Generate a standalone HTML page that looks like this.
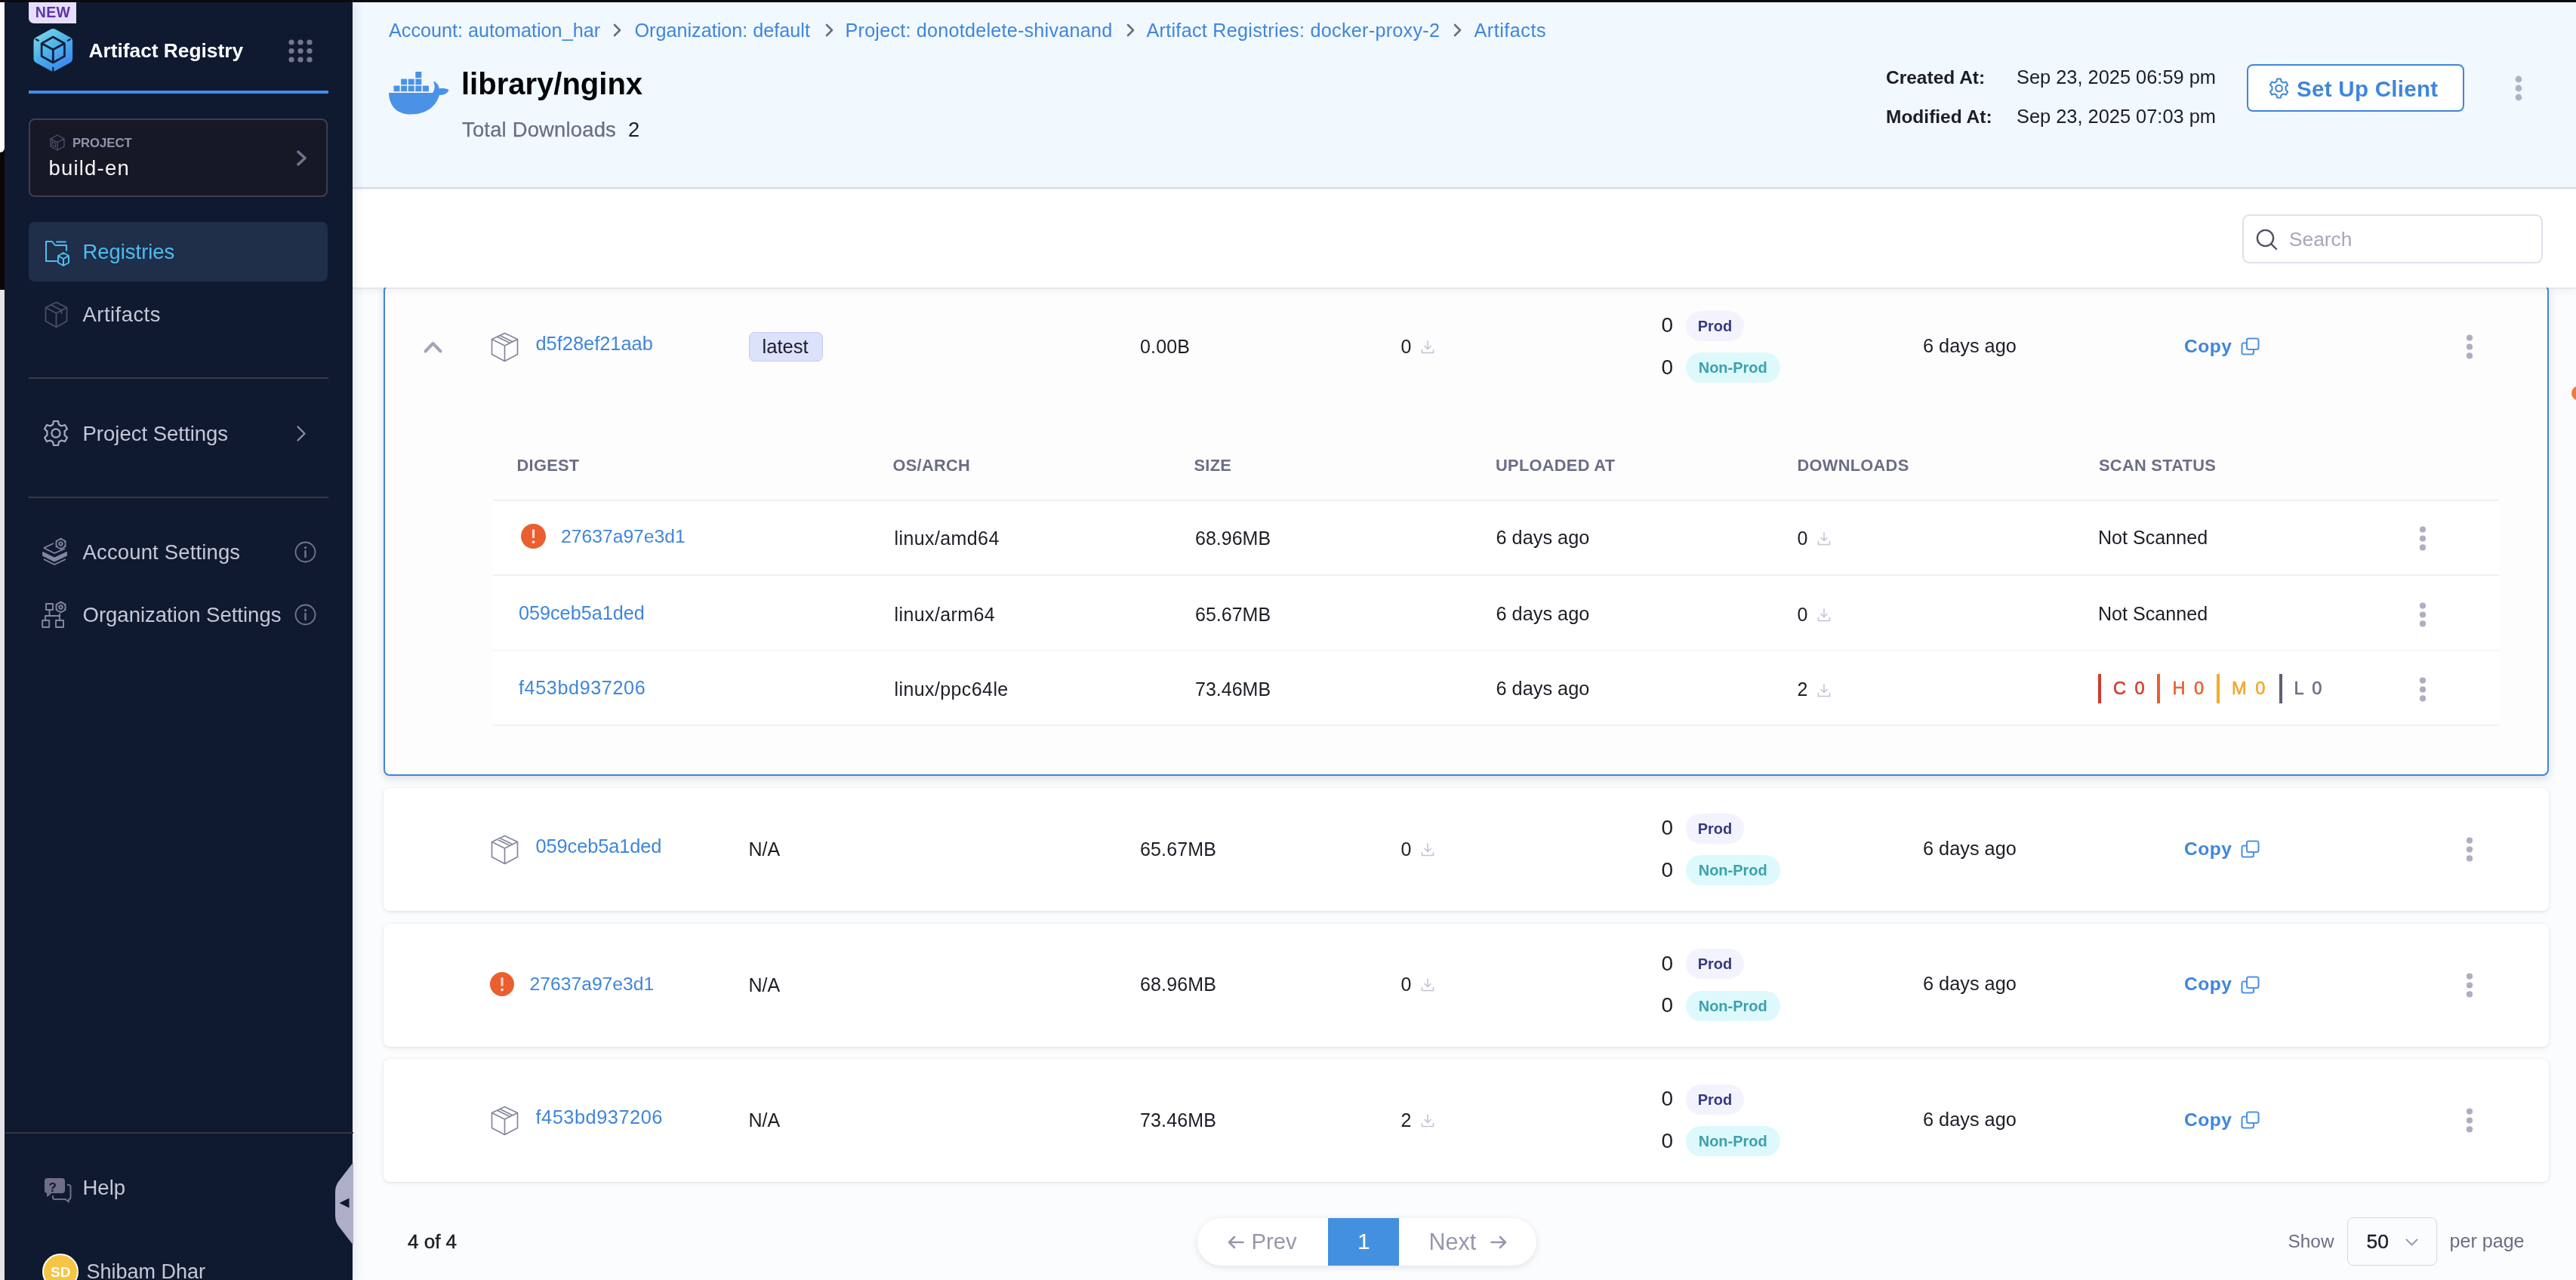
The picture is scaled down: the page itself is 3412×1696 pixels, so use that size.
<!DOCTYPE html>
<html lang="en">
<head>
<meta charset="utf-8">
<title>Artifact Registry - library/nginx</title>
<style>
*{box-sizing:border-box;margin:0;padding:0}
html,body{width:3412px;height:1696px;overflow:hidden;background:#fbfcfe}
body{position:relative;font-family:"Liberation Sans",Arial,sans-serif;color:#1d1d26;-webkit-font-smoothing:antialiased}
.abs{position:absolute}
.g{position:absolute;left:0;top:0;will-change:transform}
.t{position:absolute;white-space:nowrap;line-height:1;transform:translateY(-50%)}
svg{position:absolute;overflow:visible}
a{text-decoration:none;color:inherit}

/* window chrome bits */
#topbar{left:0;top:0;width:3412px;height:2.6px;background:#0b0b0d;z-index:50}
#leftstrip{left:0;top:0;width:6px;height:1696px;background:#e9e9eb}
#leftstrip .w{left:0;top:0;width:6px;height:202px;background:#fff;border-bottom-right-radius:6px}
#leftstrip .k{left:0;top:180px;width:6px;height:204px;background:#0b0707}

/* sidebar */
#side{left:6px;top:0;width:461px;height:1696px;background:#0f1a31;box-shadow:3px 0 14px rgba(30,40,70,.10);z-index:8}
#sidein{position:absolute;left:1.5px;top:0;width:459.5px;height:1696px;will-change:transform}
#side .lbl{color:#c6c7d6;font-size:27px}
#side .div{position:absolute;left:30px;width:396.5px;height:2px;background:#3a3a40}

/* header */
#head{left:467px;top:0;width:2945px;height:250px;background:#f1f8fe;border-bottom:2px solid #d4dcea}
.bc{font-size:24px;color:#3f86db}
.bcsep{color:#6a6d80}
#tool{left:467px;top:252px;width:2945px;height:129px;background:#fff;box-shadow:0 3px 10px rgba(40,41,61,.08),0 1px 2px rgba(96,97,112,.12);z-index:5}

/* cards */
.card{position:absolute;left:508px;width:2868px;background:#fff;border-radius:8px;box-shadow:0 0 2px rgba(40,41,61,.05),0 1px 4px rgba(96,97,112,.13),0 2px 8px rgba(40,41,61,.04)}
.link{color:#3f86db}
.cell{font-size:26px;color:#1d1d26}
.pill{position:absolute;height:40px;border-radius:20px;font-weight:700;font-size:20px;line-height:40px;text-align:center}
.prod{background:#f3f3fd;color:#343b80}
.nprod{background:#ddf9fb;color:#3ca1ab}
.th{font-size:21.8px;font-weight:700;color:#6b6d85;letter-spacing:.3px}
.hr{position:absolute;height:1.6px;background:#eff0f7}
</style>
</head>
<body>

<div id="leftstrip" class="abs"><div class="abs k"></div><div class="abs w"></div></div>

<!-- ============ SIDEBAR ============ -->
<nav id="side" class="abs"><div id="sidein">
  <!-- NEW badge -->
  <div class="abs" style="left:29.7px;top:0;width:63.3px;height:30.7px;background:#e6defc;border-radius:0 0 0 7px"></div>
  <span class="t" style="left:38.8px;top:16.5px;font-size:19.5px;font-weight:700;color:#5b35a3;letter-spacing:.3px">NEW</span>

  <!-- product logo -->
  <svg style="left:34.5px;top:35.6px" width="54.6" height="60.5" viewBox="0 0 54 58" preserveAspectRatio="none">
    <defs><linearGradient id="lg" x1="0.15" y1="0" x2="0.8" y2="1"><stop offset="0" stop-color="#7adbe6"/><stop offset=".5" stop-color="#49aeea"/><stop offset="1" stop-color="#3b84f0"/></linearGradient></defs>
    <path d="M24 2.6 Q27 1 30 2.6 L49.5 13 Q52.5 14.6 52.5 18 L52.5 40 Q52.5 43.4 49.5 45 L30 55.4 Q27 57 24 55.4 L4.5 45 Q1.5 43.4 1.5 40 L1.5 18 Q1.5 14.6 4.5 13 Z" fill="url(#lg)"/>
    <path d="M27 12.5 L42 20.5 L42 37 L27 45 L12 37 L12 20.5 Z M12 20.5 L27 28.5 L42 20.5 M27 28.5 L27 45" fill="none" stroke="#10203c" stroke-width="2.7" stroke-linejoin="round"/>
    <path d="M27 50.5 L27 56.5 M4 15 L8.5 17.5 M50 15 L45.5 17.5" stroke="#10203c" stroke-width="2.2" fill="none"/>
  </svg>
  <span class="t" style="left:109.5px;top:67px;font-size:26.3px;font-weight:700;color:#fff">Artifact Registry</span>

  <!-- module grid -->
  <svg style="left:373.5px;top:52px" width="32" height="31" viewBox="0 0 32 31" fill="#76778e">
    <circle cx="4" cy="4" r="3.6"/><circle cx="16" cy="4" r="3.6"/><circle cx="28" cy="4" r="3.6"/>
    <circle cx="4" cy="15.5" r="3.6"/><circle cx="16" cy="15.5" r="3.6"/><circle cx="28" cy="15.5" r="3.6"/>
    <circle cx="4" cy="27" r="3.6"/><circle cx="16" cy="27" r="3.6"/><circle cx="28" cy="27" r="3.6"/>
  </svg>
  <div class="abs" style="left:30px;top:120.2px;width:396.5px;height:4.3px;background:#3f8fe6"></div>

  <!-- project selector -->
  <div class="abs" style="left:30px;top:157px;width:396px;height:104px;background:#161826;border:2px solid #3d3f50;border-radius:8px"></div>
  <svg style="left:58.2px;top:178px" width="20" height="22" viewBox="0 0 20 22" fill="none" stroke="#4b4d64" stroke-width="1.4" stroke-linejoin="round">
    <path d="M10 1 L19 5.8 L19 16.2 L10 21 L1 16.2 L1 5.8 Z M1 5.8 L10 10.6 L19 5.8 M10 10.6 L10 21"/><path d="M3.2 9.6 L7.6 12 L7.6 16.8 L3.2 14.4 Z" stroke-width="1.2"/>
  </svg>
  <span class="t" style="left:88px;top:189.8px;font-size:16.8px;font-weight:700;color:#9495ab;letter-spacing:-.1px">PROJECT</span>
  <span class="t" style="left:56.5px;top:222.6px;font-size:27.5px;color:#f4f4f8;letter-spacing:1.2px">build-en</span>
  <svg style="left:384.5px;top:199px" width="13" height="21" viewBox="0 0 14 22" fill="none" stroke="#70718a" stroke-width="3.8" stroke-linecap="round" stroke-linejoin="round"><path d="M2 2 L12 11 L2 20"/></svg>

  <!-- Registries (active) -->
  <div class="abs" style="left:30px;top:294px;width:396px;height:79px;background:#1f2e49;border-radius:8px"></div>
  <svg style="left:50.5px;top:318px" width="34" height="36" viewBox="0 0 34 36" fill="none" stroke="#52bef0" stroke-width="2" stroke-linejoin="round" stroke-linecap="round">
    <path d="M16 28 L2 28 L2 2 L10 2 L14 7 L29 7 L29 14"/><path d="M16 2.5 L28 2.5" stroke-width="1.8"/>
    <path d="M25 17 L32 21 L32 30 L25 34 L18 30 L18 21 Z M18 21 L25 25 L32 21 M25 25 L25 34"/>
  </svg>
  <span class="t lbl" style="left:101.5px;top:334px;font-size:27.4px;color:#4dbdf0">Registries</span>

  <!-- Artifacts -->
  <svg style="left:50.5px;top:399px" width="31" height="36" viewBox="0 0 31 36" fill="none" stroke="#4b4f63" stroke-width="1.8" stroke-linejoin="round">
    <path d="M15.5 1.5 L29.5 8.5 L29.5 26.5 L15.5 34.5 L1.5 26.5 L1.5 8.5 Z M1.5 8.5 L15.5 16 L29.5 8.5 M15.5 16 L15.5 34.5 M8.5 5 L22.5 12.2 L22.5 17"/>
  </svg>
  <span class="t lbl" style="left:101.5px;top:417px;font-size:27.4px;letter-spacing:.5px">Artifacts</span>

  <div class="div" style="top:500px"></div>

  <!-- Project Settings -->
  <svg style="left:48.5px;top:556px" width="34" height="36" viewBox="0 0 34 36" fill="none" stroke="#a9aabc" stroke-width="2.2" stroke-linejoin="round">
    <path d="M14 2 L20 2 L21 6.5 L24.5 8.5 L29 7 L32 12.2 L28.6 15.4 L28.6 20.6 L32 23.8 L29 29 L24.5 27.5 L21 29.5 L20 34 L14 34 L13 29.5 L9.5 27.5 L5 29 L2 23.8 L5.4 20.6 L5.4 15.4 L2 12.2 L5 7 L9.5 8.5 L13 6.5 Z"/>
    <circle cx="17" cy="18" r="5.6"/>
  </svg>
  <span class="t lbl" style="left:101.5px;top:575px;font-size:27.5px">Project Settings</span>
  <svg style="left:384.5px;top:564px" width="12" height="21" viewBox="0 0 12 21" fill="none" stroke="#8e8fa6" stroke-width="2.2" stroke-linecap="round" stroke-linejoin="round"><path d="M1.5 1.5 L10.5 10.5 L1.5 19.5"/></svg>

  <div class="div" style="top:658px"></div>

  <!-- Account Settings -->
  <svg style="left:46.5px;top:712px" width="36" height="38" viewBox="0 0 36 38" fill="none" stroke="#8586a0" stroke-width="1.8" stroke-linejoin="round">
    <path d="M3 14 L16 8 M3 14 L17 21 L31 15" /><path d="M2 20 L17 27.5 L33 20 L33 24 L17 31.5 L2 24 Z" fill="#8586a0"/><path d="M3 29 L17 36 L32 29"/>
    <circle cx="25.5" cy="8.5" r="6.2"/><circle cx="25.5" cy="8.5" r="2.2"/>
    <path d="M25.5 0.8 L25.5 2.6 M25.5 14.4 L25.5 16.2 M18.8 4.6 L20.4 5.5 M30.6 11.5 L32.2 12.4 M18.8 12.4 L20.4 11.5 M30.6 5.5 L32.2 4.6" stroke-width="2.4"/>
  </svg>
  <span class="t lbl" style="left:101.5px;top:732px;font-size:27.5px;letter-spacing:.15px">Account Settings</span>
  <svg style="left:381.5px;top:717px" width="29" height="29" viewBox="0 0 29 29" fill="none" stroke="#74768d" stroke-width="1.8"><circle cx="14.5" cy="14.5" r="13"/><path d="M14.5 13 L14.5 21" stroke-width="2.4" stroke-linecap="round"/><circle cx="14.5" cy="8.6" r="1.6" fill="#74768d" stroke="none"/></svg>

  <!-- Organization Settings -->
  <svg style="left:46.5px;top:796px" width="36" height="38" viewBox="0 0 36 38" fill="none" stroke="#8586a0" stroke-width="1.9" stroke-linejoin="round">
    <rect x="6" y="4" width="9" height="8"/><path d="M10.5 12 L10.5 20 M5 26 L5 20 L24 20 L24 26 M24 20 L24 17"/>
    <rect x="1.2" y="26" width="9" height="9"/><rect x="19" y="26" width="10" height="9"/>
    <circle cx="25.5" cy="8.5" r="6.2"/><circle cx="25.5" cy="8.5" r="2.2"/>
    <path d="M25.5 0.8 L25.5 2.6 M25.5 14.4 L25.5 16.2 M18.8 4.6 L20.4 5.5 M30.6 11.5 L32.2 12.4 M18.8 12.4 L20.4 11.5 M30.6 5.5 L32.2 4.6" stroke-width="2.4"/>
  </svg>
  <span class="t lbl" style="left:101.5px;top:815px;font-size:27.5px">Organization Settings</span>
  <svg style="left:381.5px;top:800px" width="29" height="29" viewBox="0 0 29 29" fill="none" stroke="#74768d" stroke-width="1.8"><circle cx="14.5" cy="14.5" r="13"/><path d="M14.5 13 L14.5 21" stroke-width="2.4" stroke-linecap="round"/><circle cx="14.5" cy="8.6" r="1.6" fill="#74768d" stroke="none"/></svg>

  <div class="abs" style="left:-1.5px;top:1500px;width:461px;height:2px;background:#33343d"></div>

  <!-- Help -->
  <svg style="left:49.5px;top:1560px" width="38" height="34" viewBox="0 0 38 34" fill="none" stroke="#6e6f87" stroke-width="2" stroke-linejoin="round">
    <path d="M5 2 L24 2 Q27 2 27 5 L27 17 Q27 20 24 20 L10 20 L5 24.5 L5 20 Q2 20 2 17 L2 5 Q2 2 5 2 Z" fill="#6e6f87"/>
    <path d="M31 10 L33 10 Q35.5 10 35.5 12.5 L35.5 26.5 Q35.5 29 33 29 L33 32.5 L28.5 29 L14.5 29 Q12 29 12 26.5 L12 24"/>
  </svg>
  <span class="t" style="left:56.5px;top:1573px;font-size:17px;font-weight:700;color:#0f1a31">?</span>
  <span class="t lbl" style="left:101.5px;top:1574px;font-size:27.5px">Help</span>

  <!-- collapse handle -->
  <svg style="left:435.5px;top:1540px" width="24" height="110" viewBox="0 0 24 110"><path d="M24 0 L4 26 Q0 32 0 40 L0 70 Q0 78 4 84 L24 110 Z" fill="#aeafc6"/><path d="M18.5 47.5 L18.5 60.5 L5.5 54 Z" fill="#0f1a31"/></svg>

  <!-- user -->
  <div class="abs" style="left:48px;top:1661px;width:48px;height:48px;border-radius:50%;background:#f6c544;border:2px solid #fff"></div>
  <span class="t" style="left:59px;top:1685px;font-size:19px;font-weight:700;color:#fff">SD</span>
  <span class="t lbl" style="left:106.5px;top:1685px;font-size:27px">Shibam Dhar</span>
</div></nav>

<!-- ============ HEADER ============ -->
<header id="head" class="abs"><div class="g">
  <a class="t bc" style="left:48px;top:41px;font-size:25.2px">Account: automation_har</a><svg style="left:345px;top:31px" width="11" height="18" viewBox="0 0 11 18" fill="none" stroke="#6a6d80" stroke-width="2.6" stroke-linecap="round" stroke-linejoin="round"><path d="M2 2 L9 9 L2 16"/></svg>
  <a class="t bc" style="left:373.5px;top:41px;font-size:25.2px">Organization: default</a><svg style="left:625.5px;top:31px" width="11" height="18" viewBox="0 0 11 18" fill="none" stroke="#6a6d80" stroke-width="2.6" stroke-linecap="round" stroke-linejoin="round"><path d="M2 2 L9 9 L2 16"/></svg>
  <a class="t bc" style="left:652.5px;top:41px;font-size:25.2px;letter-spacing:.22px">Project: donotdelete-shivanand</a><svg style="left:1024.5px;top:31px" width="11" height="18" viewBox="0 0 11 18" fill="none" stroke="#6a6d80" stroke-width="2.6" stroke-linecap="round" stroke-linejoin="round"><path d="M2 2 L9 9 L2 16"/></svg>
  <a class="t bc" style="left:1051.5px;top:41px;font-size:25.2px;letter-spacing:.27px">Artifact Registries: docker-proxy-2</a><svg style="left:1458px;top:31px" width="11" height="18" viewBox="0 0 11 18" fill="none" stroke="#6a6d80" stroke-width="2.6" stroke-linecap="round" stroke-linejoin="round"><path d="M2 2 L9 9 L2 16"/></svg>
  <a class="t bc" style="left:1485.5px;top:41px;font-size:25.2px;letter-spacing:.5px">Artifacts</a>

  <!-- docker whale -->
  <svg style="left:48px;top:94px" width="80" height="58" viewBox="0 0 80 58" fill="#4a92e6">
    <path d="M0 29 L58 29 C61 25 61.5 20 59.5 15.5 C59 14 60.5 13.5 61.5 14.5 C65 17.5 66.5 20.5 66.8 23.5 C70.5 22.5 75 23 79.5 25 C78 29.5 73.5 32 67 32 C63 45 52 57.5 29 57.5 C11 57.5 0.5 47 0 29 Z"/>
    <rect x="6.5" y="19.6" width="8" height="7.6"/><rect x="16.1" y="19.6" width="8" height="7.6"/><rect x="25.7" y="19.6" width="8" height="7.6"/><rect x="35.3" y="19.6" width="8" height="7.6"/><rect x="44.9" y="19.6" width="8" height="7.6"/>
    <rect x="16.1" y="10.6" width="8" height="7.6"/><rect x="25.7" y="10.6" width="8" height="7.6"/><rect x="35.3" y="10.6" width="8" height="7.6"/>
    <rect x="35.3" y="1" width="8" height="8.2"/>
  </svg>
  <h1 class="t" style="left:144px;top:111px;font-size:40px;font-weight:700;color:#050507">library/nginx</h1>
  <span class="t" style="left:145px;top:172px;font-size:27.4px;color:#6b6d85;letter-spacing:.2px;-webkit-text-stroke:.25px #6b6d85">Total Downloads</span>
  <span class="t" style="left:365px;top:172px;font-size:27.4px;color:#1d1d26">2</span>

  <span class="t" style="left:2031px;top:103px;font-size:24.5px;font-weight:700;color:#1d1d26">Created At:</span>
  <span class="t" style="left:2204px;top:103px;font-size:25.4px;color:#1d1d26">Sep 23, 2025 06:59 pm</span>
  <span class="t" style="left:2031px;top:155px;font-size:24.5px;font-weight:700;color:#1d1d26">Modified At:</span>
  <span class="t" style="left:2204px;top:155px;font-size:25.4px;color:#1d1d26">Sep 23, 2025 07:03 pm</span>

  <div class="abs" style="left:2509px;top:85px;width:288px;height:63px;border:2px solid #3f86db;border-radius:8px;background:#fff"></div>
  <svg style="left:2538px;top:103px" width="27" height="28" viewBox="0 0 34 36" fill="none" stroke="#3f86db" stroke-width="2.6" stroke-linejoin="round">
    <path d="M14 2 L20 2 L21 6.5 L24.5 8.5 L29 7 L32 12.2 L28.6 15.4 L28.6 20.6 L32 23.8 L29 29 L24.5 27.5 L21 29.5 L20 34 L14 34 L13 29.5 L9.5 27.5 L5 29 L2 23.8 L5.4 20.6 L5.4 15.4 L2 12.2 L5 7 L9.5 8.5 L13 6.5 Z"/><circle cx="17" cy="18" r="5.6"/>
  </svg>
  <span class="t" style="left:2575px;top:118px;font-size:29.5px;font-weight:700;color:#3f86db;letter-spacing:.3px">Set Up Client</span>
  <svg style="left:2864px;top:100px" width="10" height="34" viewBox="0 0 10 34" fill="#b0b1c4"><circle cx="5" cy="5" r="4.4"/><circle cx="5" cy="17" r="4.4"/><circle cx="5" cy="29" r="4.4"/></svg>
</div></header>

<!-- ============ TOOLBAR ============ -->
<div id="tool" class="abs"><div class="g">
  <div class="abs" style="left:2503px;top:32.3px;width:398px;height:65px;border:2px solid #dfe0eb;border-radius:9px;background:#fff"></div>
  <svg style="left:2521px;top:51px" width="29" height="29" viewBox="0 0 29 29" fill="none" stroke="#4f5162" stroke-width="2.4" stroke-linecap="round"><circle cx="12.5" cy="12.5" r="10.6"/><path d="M20.5 20.5 L27 27"/></svg>
  <span class="t" style="left:2565px;top:65px;font-size:26.3px;color:#a6a7ba">Search</span>
</div></div>

<!-- ============ CONTENT ============ -->
<main id="main" class="g">
    <!-- expanded version card -->
    <section class="card" style="top:377px;height:651px;background:#fdfdfe;border:2px solid #3f86db;box-shadow:0 4px 12px rgba(40,41,61,.14)"></section>
    <div class="abs" style="left:653px;top:664px;width:2657px;height:298px;background:#fff"></div>
    <svg style="left:561px;top:451.5px" width="25" height="16" viewBox="0 0 25 16" fill="none" stroke="#a3a4ba" stroke-width="4" stroke-linecap="round" stroke-linejoin="round"><path d="M2.5 13.5 L12.5 3 L22.5 13.5"/></svg>
    <svg style="left:650px;top:439.5px" width="37" height="40" viewBox="0 0 37 40" fill="none" stroke="#85869e" stroke-width="1.7" stroke-linejoin="round"><path d="M18.5 1.5 L35.5 9.5 L35.5 29.5 L18.5 38.5 L1.5 29.5 L1.5 9.5 Z M1.5 9.5 L18.5 18 L35.5 9.5 M18.5 18 L18.5 38.5 M8.5 6.2 L25.5 14.5 M12 4.6 L29 12.8"/></svg>
    <a class="t" style="left:709.5px;top:456.0px;font-size:25.4px;color:#3f86db;">d5f28ef21aab</a>
    <span class="abs" style="left:991.5px;top:440.0px;width:98px;height:39px;background:#dce1fc;border:1.5px solid #c3caf8;border-radius:7px"></span>
    <span class="t" style="left:1009.5px;top:460.1px;font-size:25.6px;color:#1d1d26;">latest</span>
    <span class="t" style="left:1510px;top:458.5px;font-size:25px;color:#1d1d26;letter-spacing:.15px">0.00B</span>
    <span class="t" style="left:1855.5px;top:458.5px;font-size:25px;color:#1d1d26;">0</span>
    <svg style="left:1881.5px;top:450.8px" width="18" height="18" viewBox="0 0 18 18" fill="none" stroke="#c3c4d6" stroke-width="1.6" stroke-linecap="round" stroke-linejoin="round"><path d="M9 1 L9 11 M5 7.5 L9 11.5 L13 7.5 M1.5 12.5 L1.5 16.5 L16.5 16.5 L16.5 12.5"/></svg>
    <span class="t" style="left:2200.5px;top:431.3px;font-size:28px;color:#1d1d26;">0</span>
    <span class="pill prod" style="left:2233px;top:411.7px;width:77px">Prod</span>
    <span class="t" style="left:2200.5px;top:486.8px;font-size:28px;color:#1d1d26;">0</span>
    <span class="pill nprod" style="left:2233px;top:467.2px;width:124.5px">Non-Prod</span>
    <span class="t" style="left:2547px;top:458.5px;font-size:25.3px;color:#1d1d26;">6 days ago</span>
    <span class="t" style="left:2893px;top:458.7px;font-size:24.6px;color:#3f86db;font-weight:700;letter-spacing:.5px">Copy</span>
    <svg style="left:2968px;top:447.0px" width="25" height="24" viewBox="0 0 25 24" fill="none" stroke="#4f93e2" stroke-width="2.1" stroke-linejoin="round"><rect x="8" y="1.5" width="15.5" height="14.5" rx="2.5"/><path d="M8 7.5 L4 7.5 Q1.5 7.5 1.5 10 L1.5 20 Q1.5 22.5 4 22.5 L14.5 22.5 Q17 22.5 17 20 L17 16"/></svg>
    <svg style="left:3265.5px;top:443.3px" width="10" height="33" viewBox="0 0 10 33" fill="#adaec3"><circle cx="5" cy="4.6" r="4.1"/><circle cx="5" cy="16.5" r="4.1"/><circle cx="5" cy="28.4" r="4.1"/></svg>
    <span class="t th" style="left:684.5px;top:617px">DIGEST</span>
    <span class="t th" style="left:1182.5px;top:617px">OS/ARCH</span>
    <span class="t th" style="left:1581.5px;top:617px">SIZE</span>
    <span class="t th" style="left:1981px;top:617px">UPLOADED AT</span>
    <span class="t th" style="left:2380.5px;top:617px">DOWNLOADS</span>
    <span class="t th" style="left:2780px;top:617px">SCAN STATUS</span>
    <div class="hr" style="left:653px;top:662px;width:2657px"></div>
    <div class="hr" style="left:653px;top:761px;width:2657px"></div>
    <div class="hr" style="left:653px;top:860.5px;width:2657px"></div>
    <div class="hr" style="left:653px;top:960px;width:2657px"></div>
    <svg style="left:690px;top:694.0px" width="33" height="33" viewBox="0 0 33 33"><circle cx="16.5" cy="16.5" r="16.5" fill="#ea5e2f"/><path d="M16.5 7.5 L16.5 19" stroke="#fbdcd1" stroke-width="3.2" stroke-linecap="butt"/><circle cx="16.5" cy="24.2" r="1.9" fill="#fbdcd1"/></svg>
    <a class="t" style="left:743px;top:710.5px;font-size:24.7px;color:#3f86db;">27637a97e3d1</a>
    <span class="t" style="left:1184.5px;top:712.5px;font-size:25px;color:#1d1d26;letter-spacing:.4px">linux/amd64</span>
    <span class="t" style="left:1583px;top:712.5px;font-size:25px;color:#1d1d26;">68.96MB</span>
    <span class="t" style="left:1981.5px;top:712.5px;font-size:25.3px;color:#1d1d26;">6 days ago</span>
    <span class="t" style="left:2380.5px;top:712.5px;font-size:25px;color:#1d1d26;">0</span>
    <svg style="left:2406.5px;top:705.3px" width="18" height="18" viewBox="0 0 18 18" fill="none" stroke="#c3c4d6" stroke-width="1.6" stroke-linecap="round" stroke-linejoin="round"><path d="M9 1 L9 11 M5 7.5 L9 11.5 L13 7.5 M1.5 12.5 L1.5 16.5 L16.5 16.5 L16.5 12.5"/></svg>
    <span class="t" style="left:2779px;top:713.0px;font-size:25.1px;color:#1d1d26;">Not Scanned</span>
    <svg style="left:3203.5px;top:696.5px" width="10" height="33" viewBox="0 0 10 33" fill="#adaec3"><circle cx="5" cy="4.6" r="4.1"/><circle cx="5" cy="16.5" r="4.1"/><circle cx="5" cy="28.4" r="4.1"/></svg>
    <a class="t" style="left:687px;top:812.5px;font-size:25.2px;color:#3f86db;">059ceb5a1ded</a>
    <span class="t" style="left:1184.5px;top:813.5px;font-size:25px;color:#1d1d26;letter-spacing:.4px">linux/arm64</span>
    <span class="t" style="left:1583px;top:813.5px;font-size:25px;color:#1d1d26;">65.67MB</span>
    <span class="t" style="left:1981.5px;top:813.5px;font-size:25.3px;color:#1d1d26;">6 days ago</span>
    <span class="t" style="left:2380.5px;top:813.5px;font-size:25px;color:#1d1d26;">0</span>
    <svg style="left:2406.5px;top:806.3px" width="18" height="18" viewBox="0 0 18 18" fill="none" stroke="#c3c4d6" stroke-width="1.6" stroke-linecap="round" stroke-linejoin="round"><path d="M9 1 L9 11 M5 7.5 L9 11.5 L13 7.5 M1.5 12.5 L1.5 16.5 L16.5 16.5 L16.5 12.5"/></svg>
    <span class="t" style="left:2779px;top:814.0px;font-size:25.1px;color:#1d1d26;">Not Scanned</span>
    <svg style="left:3203.5px;top:797.5px" width="10" height="33" viewBox="0 0 10 33" fill="#adaec3"><circle cx="5" cy="4.6" r="4.1"/><circle cx="5" cy="16.5" r="4.1"/><circle cx="5" cy="28.4" r="4.1"/></svg>
    <a class="t" style="left:687px;top:912px;font-size:25.2px;color:#3f86db;letter-spacing:.6px">f453bd937206</a>
    <span class="t" style="left:1184.5px;top:913px;font-size:25px;color:#1d1d26;letter-spacing:.4px">linux/ppc64le</span>
    <span class="t" style="left:1583px;top:913px;font-size:25px;color:#1d1d26;">73.46MB</span>
    <span class="t" style="left:1981.5px;top:913px;font-size:25.3px;color:#1d1d26;">6 days ago</span>
    <span class="t" style="left:2380.5px;top:913px;font-size:25px;color:#1d1d26;">2</span>
    <svg style="left:2406.5px;top:905.8px" width="18" height="18" viewBox="0 0 18 18" fill="none" stroke="#c3c4d6" stroke-width="1.6" stroke-linecap="round" stroke-linejoin="round"><path d="M9 1 L9 11 M5 7.5 L9 11.5 L13 7.5 M1.5 12.5 L1.5 16.5 L16.5 16.5 L16.5 12.5"/></svg>
    <span class="abs" style="left:2779px;top:892.5px;width:4px;height:39px;background:#cf3b2a"></span>
    <span class="t" style="left:2799px;top:913px;font-size:23.6px;color:#d2402f;letter-spacing:3px;word-spacing:-1px;-webkit-text-stroke:.6px #d2402f">C 0</span>
    <span class="abs" style="left:2857px;top:892.5px;width:4px;height:39px;background:#e8602c"></span>
    <span class="t" style="left:2877.5px;top:913px;font-size:23.6px;color:#e8602c;letter-spacing:3px;word-spacing:-1px;-webkit-text-stroke:.6px #e8602c">H 0</span>
    <span class="abs" style="left:2936px;top:892.5px;width:4px;height:39px;background:#f5ab2c"></span>
    <span class="t" style="left:2956px;top:913px;font-size:23.6px;color:#f1a82a;letter-spacing:3px;word-spacing:-1px;-webkit-text-stroke:.6px #f1a82a">M 0</span>
    <span class="abs" style="left:3018.5px;top:892.5px;width:4px;height:39px;background:#5e5f78"></span>
    <span class="t" style="left:3038.5px;top:913px;font-size:23.6px;color:#6b6d85;letter-spacing:3px;word-spacing:-1px;-webkit-text-stroke:.6px #6b6d85">L 0</span>
    <svg style="left:3203.5px;top:897.0px" width="10" height="33" viewBox="0 0 10 33" fill="#adaec3"><circle cx="5" cy="4.6" r="4.1"/><circle cx="5" cy="16.5" r="4.1"/><circle cx="5" cy="28.4" r="4.1"/></svg>
    <!-- version card -->
    <section class="card" style="top:1044px;height:163px"></section>
    <svg style="left:650px;top:1105.5px" width="37" height="40" viewBox="0 0 37 40" fill="none" stroke="#85869e" stroke-width="1.7" stroke-linejoin="round"><path d="M18.5 1.5 L35.5 9.5 L35.5 29.5 L18.5 38.5 L1.5 29.5 L1.5 9.5 Z M1.5 9.5 L18.5 18 L35.5 9.5 M18.5 18 L18.5 38.5 M8.5 6.2 L25.5 14.5 M12 4.6 L29 12.8"/></svg>
    <a class="t" style="left:709.5px;top:1122.0px;font-size:25.4px;color:#3f86db;letter-spacing:-.1px">059ceb5a1ded</a>
    <span class="t" style="left:991.5px;top:1125.1px;font-size:25px;color:#1d1d26;">N/A</span>
    <span class="t" style="left:1510px;top:1124.5px;font-size:25px;color:#1d1d26;letter-spacing:.15px">65.67MB</span>
    <span class="t" style="left:1855.5px;top:1124.5px;font-size:25px;color:#1d1d26;">0</span>
    <svg style="left:1881.5px;top:1116.8px" width="18" height="18" viewBox="0 0 18 18" fill="none" stroke="#c3c4d6" stroke-width="1.6" stroke-linecap="round" stroke-linejoin="round"><path d="M9 1 L9 11 M5 7.5 L9 11.5 L13 7.5 M1.5 12.5 L1.5 16.5 L16.5 16.5 L16.5 12.5"/></svg>
    <span class="t" style="left:2200.5px;top:1097.3px;font-size:28px;color:#1d1d26;">0</span>
    <span class="pill prod" style="left:2233px;top:1077.7px;width:77px">Prod</span>
    <span class="t" style="left:2200.5px;top:1152.8px;font-size:28px;color:#1d1d26;">0</span>
    <span class="pill nprod" style="left:2233px;top:1133.2px;width:124.5px">Non-Prod</span>
    <span class="t" style="left:2547px;top:1124.5px;font-size:25.3px;color:#1d1d26;">6 days ago</span>
    <span class="t" style="left:2893px;top:1124.7px;font-size:24.6px;color:#3f86db;font-weight:700;letter-spacing:.5px">Copy</span>
    <svg style="left:2968px;top:1113.0px" width="25" height="24" viewBox="0 0 25 24" fill="none" stroke="#4f93e2" stroke-width="2.1" stroke-linejoin="round"><rect x="8" y="1.5" width="15.5" height="14.5" rx="2.5"/><path d="M8 7.5 L4 7.5 Q1.5 7.5 1.5 10 L1.5 20 Q1.5 22.5 4 22.5 L14.5 22.5 Q17 22.5 17 20 L17 16"/></svg>
    <svg style="left:3265.5px;top:1109.3px" width="10" height="33" viewBox="0 0 10 33" fill="#adaec3"><circle cx="5" cy="4.6" r="4.1"/><circle cx="5" cy="16.5" r="4.1"/><circle cx="5" cy="28.4" r="4.1"/></svg>
    <!-- version card -->
    <section class="card" style="top:1223.5px;height:163px"></section>
    <svg style="left:649px;top:1287.7px" width="32" height="32" viewBox="0 0 33 33"><circle cx="16.5" cy="16.5" r="16.5" fill="#ea5e2f"/><path d="M16.5 7.5 L16.5 19" stroke="#fbdcd1" stroke-width="3.2" stroke-linecap="butt"/><circle cx="16.5" cy="24.2" r="1.9" fill="#fbdcd1"/></svg>
    <a class="t" style="left:701.5px;top:1304.0px;font-size:24.7px;color:#3f86db;">27637a97e3d1</a>
    <span class="t" style="left:991.5px;top:1304.6px;font-size:25px;color:#1d1d26;">N/A</span>
    <span class="t" style="left:1510px;top:1304.0px;font-size:25px;color:#1d1d26;letter-spacing:.15px">68.96MB</span>
    <span class="t" style="left:1855.5px;top:1304.0px;font-size:25px;color:#1d1d26;">0</span>
    <svg style="left:1881.5px;top:1296.3px" width="18" height="18" viewBox="0 0 18 18" fill="none" stroke="#c3c4d6" stroke-width="1.6" stroke-linecap="round" stroke-linejoin="round"><path d="M9 1 L9 11 M5 7.5 L9 11.5 L13 7.5 M1.5 12.5 L1.5 16.5 L16.5 16.5 L16.5 12.5"/></svg>
    <span class="t" style="left:2200.5px;top:1276.8px;font-size:28px;color:#1d1d26;">0</span>
    <span class="pill prod" style="left:2233px;top:1257.2px;width:77px">Prod</span>
    <span class="t" style="left:2200.5px;top:1332.3px;font-size:28px;color:#1d1d26;">0</span>
    <span class="pill nprod" style="left:2233px;top:1312.7px;width:124.5px">Non-Prod</span>
    <span class="t" style="left:2547px;top:1304.0px;font-size:25.3px;color:#1d1d26;">6 days ago</span>
    <span class="t" style="left:2893px;top:1304.2px;font-size:24.6px;color:#3f86db;font-weight:700;letter-spacing:.5px">Copy</span>
    <svg style="left:2968px;top:1292.5px" width="25" height="24" viewBox="0 0 25 24" fill="none" stroke="#4f93e2" stroke-width="2.1" stroke-linejoin="round"><rect x="8" y="1.5" width="15.5" height="14.5" rx="2.5"/><path d="M8 7.5 L4 7.5 Q1.5 7.5 1.5 10 L1.5 20 Q1.5 22.5 4 22.5 L14.5 22.5 Q17 22.5 17 20 L17 16"/></svg>
    <svg style="left:3265.5px;top:1288.8px" width="10" height="33" viewBox="0 0 10 33" fill="#adaec3"><circle cx="5" cy="4.6" r="4.1"/><circle cx="5" cy="16.5" r="4.1"/><circle cx="5" cy="28.4" r="4.1"/></svg>
    <!-- version card -->
    <section class="card" style="top:1403px;height:163px"></section>
    <svg style="left:650px;top:1464.5px" width="37" height="40" viewBox="0 0 37 40" fill="none" stroke="#85869e" stroke-width="1.7" stroke-linejoin="round"><path d="M18.5 1.5 L35.5 9.5 L35.5 29.5 L18.5 38.5 L1.5 29.5 L1.5 9.5 Z M1.5 9.5 L18.5 18 L35.5 9.5 M18.5 18 L18.5 38.5 M8.5 6.2 L25.5 14.5 M12 4.6 L29 12.8"/></svg>
    <a class="t" style="left:709.5px;top:1481.0px;font-size:25.4px;color:#3f86db;letter-spacing:.5px">f453bd937206</a>
    <span class="t" style="left:991.5px;top:1484.1px;font-size:25px;color:#1d1d26;">N/A</span>
    <span class="t" style="left:1510px;top:1483.5px;font-size:25px;color:#1d1d26;letter-spacing:.15px">73.46MB</span>
    <span class="t" style="left:1855.5px;top:1483.5px;font-size:25px;color:#1d1d26;">2</span>
    <svg style="left:1881.5px;top:1475.8px" width="18" height="18" viewBox="0 0 18 18" fill="none" stroke="#c3c4d6" stroke-width="1.6" stroke-linecap="round" stroke-linejoin="round"><path d="M9 1 L9 11 M5 7.5 L9 11.5 L13 7.5 M1.5 12.5 L1.5 16.5 L16.5 16.5 L16.5 12.5"/></svg>
    <span class="t" style="left:2200.5px;top:1456.3px;font-size:28px;color:#1d1d26;">0</span>
    <span class="pill prod" style="left:2233px;top:1436.7px;width:77px">Prod</span>
    <span class="t" style="left:2200.5px;top:1511.8px;font-size:28px;color:#1d1d26;">0</span>
    <span class="pill nprod" style="left:2233px;top:1492.2px;width:124.5px">Non-Prod</span>
    <span class="t" style="left:2547px;top:1483.5px;font-size:25.3px;color:#1d1d26;">6 days ago</span>
    <span class="t" style="left:2893px;top:1483.7px;font-size:24.6px;color:#3f86db;font-weight:700;letter-spacing:.5px">Copy</span>
    <svg style="left:2968px;top:1472.0px" width="25" height="24" viewBox="0 0 25 24" fill="none" stroke="#4f93e2" stroke-width="2.1" stroke-linejoin="round"><rect x="8" y="1.5" width="15.5" height="14.5" rx="2.5"/><path d="M8 7.5 L4 7.5 Q1.5 7.5 1.5 10 L1.5 20 Q1.5 22.5 4 22.5 L14.5 22.5 Q17 22.5 17 20 L17 16"/></svg>
    <svg style="left:3265.5px;top:1468.3px" width="10" height="33" viewBox="0 0 10 33" fill="#adaec3"><circle cx="5" cy="4.6" r="4.1"/><circle cx="5" cy="16.5" r="4.1"/><circle cx="5" cy="28.4" r="4.1"/></svg>
    <div class="abs" style="left:3406px;top:511px;width:20px;height:20px;border-radius:50%;background:#ee7a42"></div>
    <!-- pagination -->
    <span class="t" style="left:540px;top:1644.6px;font-size:26px;color:#1d1d26;-webkit-text-stroke:.5px #1d1d26">4 of 4</span>
    <div class="abs" style="left:1586px;top:1614px;width:449px;height:63px;border-radius:32px;background:#fff;box-shadow:0 2px 8px rgba(96,97,112,.17)"></div>
    <div class="abs" style="left:1759px;top:1614px;width:94px;height:63px;background:#4390e0"></div>
    <span class="t" style="left:1798px;top:1645px;font-size:30px;color:#fff;">1</span>
    <svg style="left:1626px;top:1636.5px" width="22" height="18" viewBox="0 0 22 18" fill="none" stroke="#9697ae" stroke-width="2.6" stroke-linecap="round" stroke-linejoin="round"><path d="M20.5 9 L2 9 M9 2 L2 9 L9 16"/></svg>
    <span class="t" style="left:1657.5px;top:1645px;font-size:29.3px;color:#9697ae;">Prev</span>
    <span class="t" style="left:1892.5px;top:1645px;font-size:30.5px;color:#9697ae;">Next</span>
    <svg style="left:1973.5px;top:1636.5px" width="22" height="18" viewBox="0 0 22 18" fill="none" stroke="#9697ae" stroke-width="2.6" stroke-linecap="round" stroke-linejoin="round"><path d="M1.5 9 L20 9 M13 2 L20 9 L13 16"/></svg>
    <span class="t" style="left:3030.5px;top:1644.5px;font-size:24.4px;color:#6b6d85;">Show</span>
    <div class="abs" style="left:3109px;top:1613px;width:119px;height:63.5px;border:1.5px solid #d6d7e6;border-radius:8px"></div>
    <span class="t" style="left:3134.5px;top:1645px;font-size:26.5px;color:#1d1d26;-webkit-text-stroke:.4px #1d1d26">50</span>
    <svg style="left:3186px;top:1640.5px" width="17" height="10" viewBox="0 0 17 10" fill="none" stroke="#9596b0" stroke-width="1.8" stroke-linecap="round" stroke-linejoin="round"><path d="M1.5 1.5 L8.5 8.5 L15.5 1.5"/></svg>
    <span class="t" style="left:3244.5px;top:1644.5px;font-size:25.1px;color:#6b6d85;">per page</span>
</main>

<div id="topbar" class="abs"></div>
</body>
</html>
